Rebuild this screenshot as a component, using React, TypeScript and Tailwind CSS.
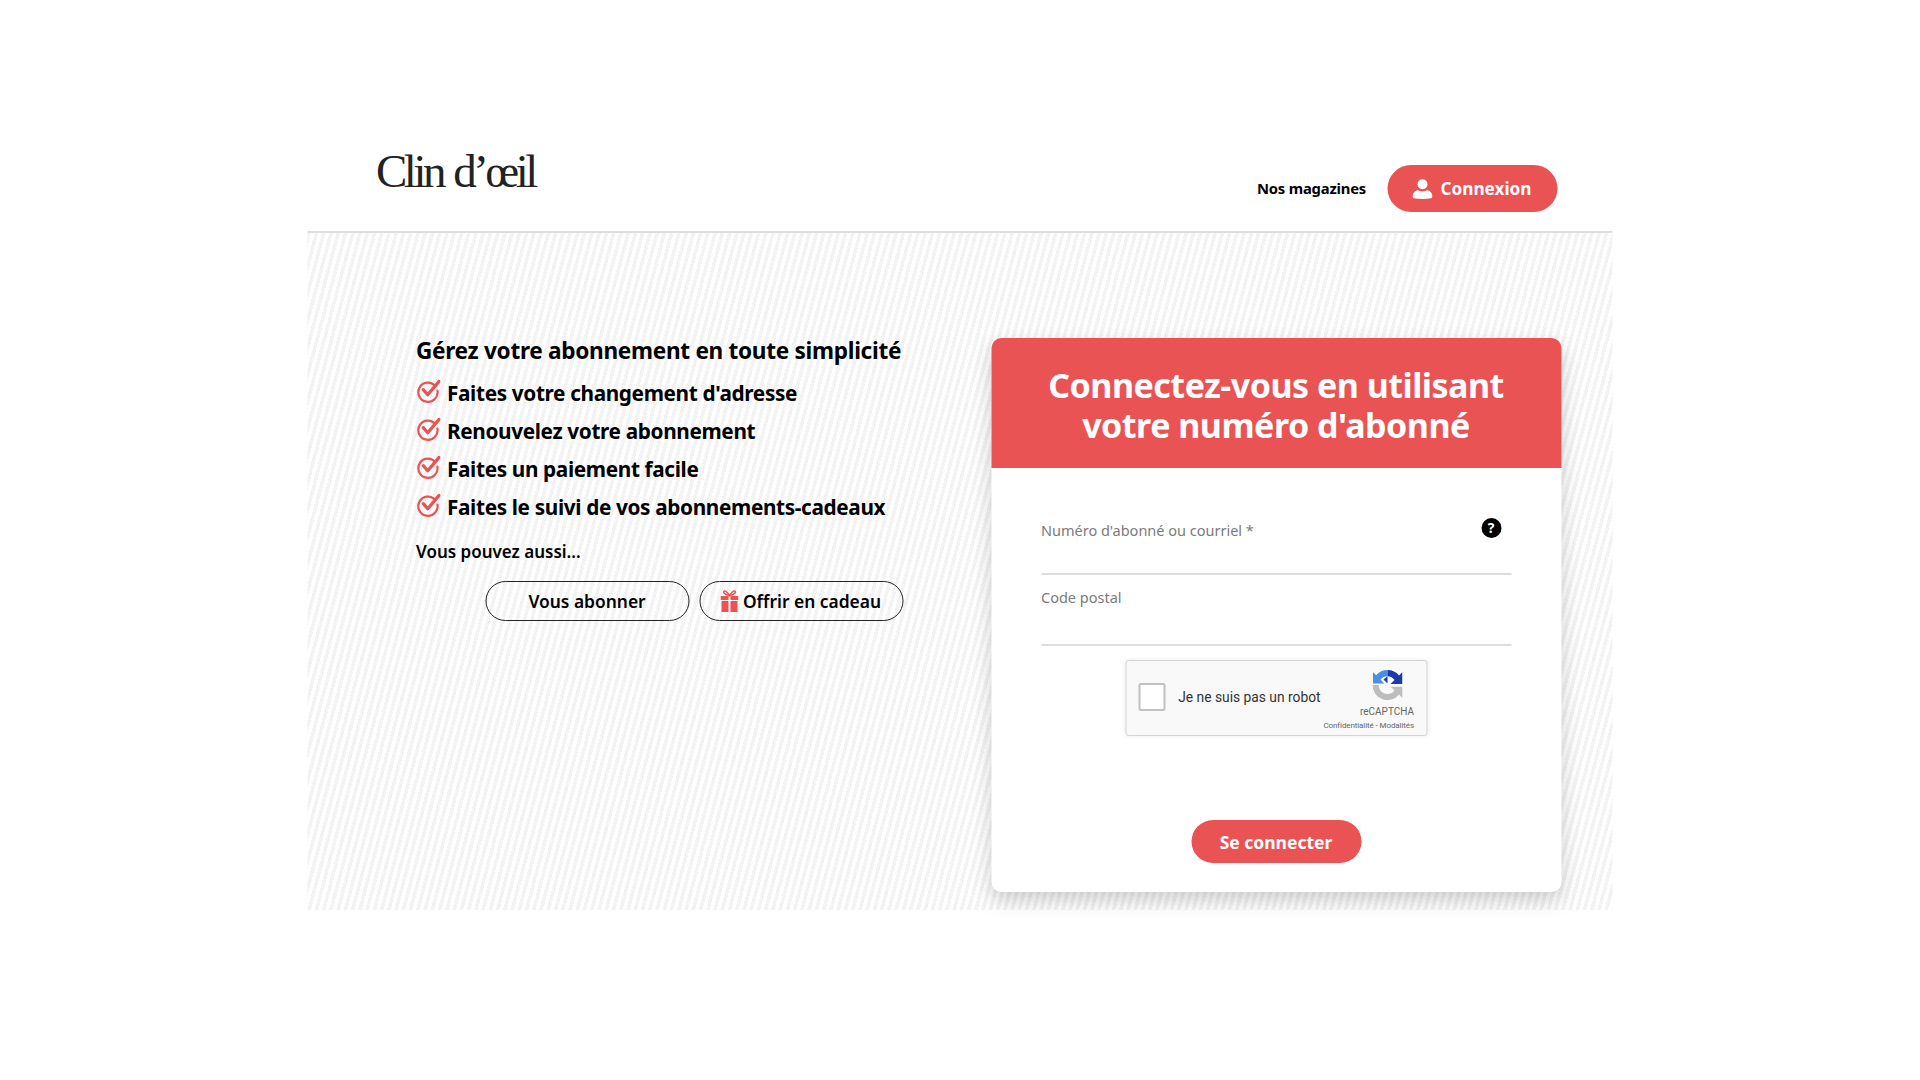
import React from 'react';

const features = [
    "Faites votre changement d'adresse",
    'Renouvelez votre abonnement',
    'Faites un paiement facile',
    'Faites le suivi de vos abonnements-cadeaux',
];

const CheckMark = () => (
    <svg width="24" height="24" viewBox="0 0 24 24" fill="none" className="mt-[1px] shrink-0 self-start">
        <path d="M18.6 6.8A9.6 9.6 0 1 0 20.9 11.5" stroke="#e95354" strokeWidth="2.2" strokeLinecap="round" />
        <path d="M6.8 10.6l4.4 5.2L22.6 2.4" stroke="#e95354" strokeWidth="3.2" strokeLinecap="round" strokeLinejoin="round" />
    </svg>
);

const UserIcon = () => (
    <svg width="20" height="20" viewBox="0 0 20 20" fill="#fff">
        <circle cx="10" cy="5.2" r="5" />
        <path d="M0 17.6c0-3.8 3-6.4 5.6-6.4 1.3.8 2.8 1.2 4.4 1.2s3.1-.4 4.4-1.2c2.6 0 5.6 2.6 5.6 6.4 0 .8-.4 1.4-1.2 1.6-5.8 1-11.8 1-17.6 0-.8-.2-1.2-.8-1.2-1.6z" />
    </svg>
);

const GiftIcon = () => (
    <svg width="18" height="24" viewBox="0 0 18 24" fill="#e95354">
        <path d="M0 7h8v4H0zM10 7h8v4h-8zM1 12h7v11H1zM10 12h7v11h-7z" />
        <path d="M9 6.5C7 3.5 5 1.5 3.6 2.2 2.2 3 3.4 5.6 9 6.5zM9 6.5c2-3 4-5 5.4-4.3 1.4.8.2 3.4-5.4 4.3z" fill="none" stroke="#e95354" strokeWidth="1.5" />
    </svg>
);

const RecaptchaLogo = () => (
    <svg width="30" height="30" viewBox="0 0 30 30">
        <path d="M15 0A15 15 0 0 0 3.6 5.3L0.5 2.2V13.5h11.3L8 9.6A8.8 8.8 0 0 1 15 6.2z" fill="#4a90e2" />
        <path d="M15 0A15 15 0 0 1 26.6 5.5L30 2v12H18l4-4A8.8 8.8 0 0 0 15 6.2L11 9.5 15 13.5z" fill="#1c3aa9" />
        <path d="M0 15h6.2A8.8 8.8 0 0 0 22 20.5l-3.8-3.8H30V28l-3.4-3.4A15 15 0 0 1 0 15z" fill="#bdbdbd" />
    </svg>
);

export default function App() {
    return (
        <div className="min-h-[1080px] bg-white font-['Noto_Sans',sans-serif] text-black">
            <div className="mx-auto w-[1305px] translate-x-[-0.5px]">
                <header className="flex h-[233px] items-start justify-between border-b-2 border-[#dedede] pl-[69px] pr-[55px]">
                    <div className="mt-[143px] font-['Liberation_Serif',serif] text-[47px] leading-[56px] tracking-[-3.5px] [word-spacing:2px] text-[#222]">
                        Clin d’œil
                    </div>
                    <nav className="mt-[165px] flex items-center gap-[21px]">
                        <a className="text-[14.8px] font-bold tracking-[-0.2px]">Nos magazines</a>
                        <button className="flex h-[47px] w-[170px] items-center justify-center gap-[8px] rounded-full bg-[#e95354] text-[17.2px] font-bold text-white">
                            <UserIcon />
                            Connexion
                        </button>
                    </nav>
                </header>

                <main className="flex h-[677px] items-start bg-[repeating-linear-gradient(105deg,#f3f3f3_0px,#f3f3f3_3.5px,#ffffff_3.5px,#ffffff_7px)] pl-[109px] pt-[100px]">
                    <section className="w-[575px]">
                        <h1 className="mt-[1px] text-[22.6px] leading-[34px] font-bold tracking-[-0.3px]">Gérez votre abonnement en toute simplicité</h1>
                        <ul className="mt-[10px] flex flex-col gap-[6px]">
                            {features.map((f) => (
                                <li key={f} className="flex h-[32px] items-center gap-[7px] text-[20.75px] font-bold tracking-[-0.35px]">
                                    <CheckMark />
                                    {f}
                                </li>
                            ))}
                        </ul>
                        <p className="mt-[16px] text-[17px] leading-[24px] font-semibold">Vous pouvez aussi...</p>
                        <div className="mt-[17px] flex w-[487px] justify-end gap-[10px]">
                            <button className="h-[40px] w-[204px] rounded-full border border-[#222] text-[17.4px] font-semibold">Vous abonner</button>
                            <button className="flex h-[40px] w-[204px] items-center justify-center gap-[4px] rounded-full border border-[#222] text-[17.4px] font-semibold">
                                <GiftIcon />
                                Offrir en cadeau
                            </button>
                        </div>
                    </section>

                    <section className="mt-[5px] flex h-[554px] w-[570px] flex-col rounded-[10px] bg-white shadow-[0_8px_20px_rgba(0,0,0,0.18)]">
                        <h2 className="flex h-[130px] items-center justify-center rounded-t-[10px] bg-[#e95354] pt-[3px] text-center text-[34px] leading-[40px] font-bold tracking-[-0.5px] text-white">
                            <span>Connectez-vous en utilisant<br />votre numéro d'abonné</span>
                        </h2>
                        <div className="flex flex-1 flex-col px-[50px]">
                            <div className="relative mt-[50px] h-[57px] border-b-2 border-[#dcdcdc] text-[14.5px] leading-[24px] text-[#7b7b7b]">
                                Numéro d'abonné ou courriel *
                                <span className="absolute right-[10px] top-[0px] flex h-[20px] w-[20px] items-center justify-center rounded-full bg-black text-[14px] font-bold text-white">?</span>
                            </div>
                            <div className="mt-[10px] h-[61px] border-b-2 border-[#dcdcdc] text-[14.5px] leading-[24px] text-[#7b7b7b]">Code postal</div>
                            <div className="mt-[14px] flex h-[76px] w-[302px] self-center rounded-[3px] border border-[#d3d3d3] bg-[#f9f9f9] font-['Roboto',sans-serif] shadow-[0_0_4px_rgba(0,0,0,0.08)]">
                                <div className="ml-[12px] mt-[22px] h-[28px] w-[28px] rounded-[2px] border-2 border-[#c1c1c1] bg-white" />
                                <div className="ml-[13px] mt-[26px] w-[150px] whitespace-nowrap text-[13.8px] leading-[20px] text-[#333]">Je ne suis pas un robot</div>
                                <div className="mt-[9px] flex flex-1 flex-col items-end pr-[12px] text-[#666]">
                                    <div className="mr-[12px]"><RecaptchaLogo /></div>
                                    <div className="mt-[6px] text-[10px] leading-[12px]">reCAPTCHA</div>
                                    <div className="mt-[2px] whitespace-nowrap text-[8px] leading-[11px] tracking-[-0.1px]">Confidentialité - Modalités</div>
                                </div>
                            </div>
                            <button className="mt-[84px] h-[43px] w-[170px] self-center rounded-full bg-[#e95354] pt-[2px] text-[17.5px] font-bold text-white">Se connecter</button>
                        </div>
                    </section>
                </main>
            </div>
        </div>
    );
}
